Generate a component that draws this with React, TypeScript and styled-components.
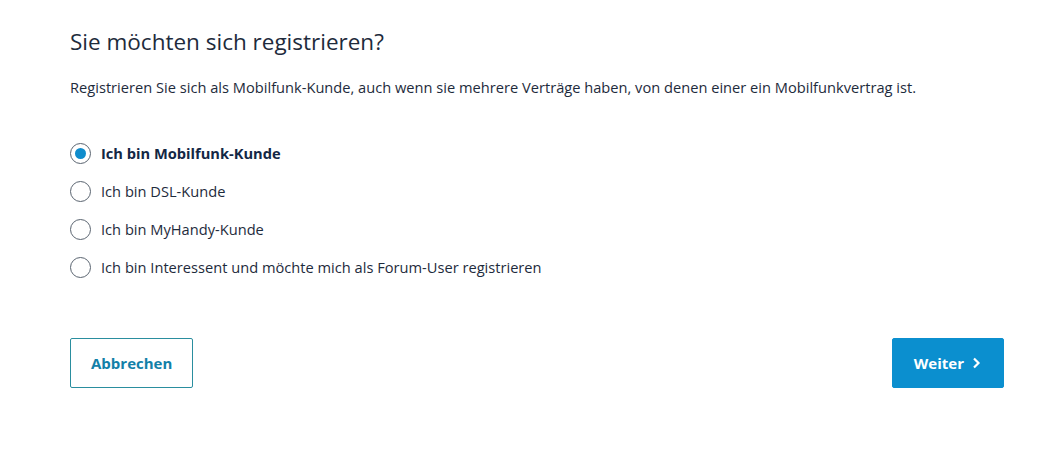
import React, { useState } from "react";
import styled, { createGlobalStyle } from "styled-components";

const Global = createGlobalStyle`
  html, body { margin: 0; padding: 0; background: #ffffff; }
  body { font-family: "Open Sans", "Noto Sans", sans-serif; color: #1e2b3c; }
`;

const Page = styled.div`
  width: 1060px;
  height: 452px;
  box-sizing: border-box;
  padding: 26px 56px 0 70px;
  display: flex;
  flex-direction: column;
`;

const Title = styled.h1`
  margin: 0;
  font-size: 22.5px;
  font-weight: 400;
  line-height: 32px;
  color: #1e2b3c;
`;

const Lead = styled.p`
  margin: 17px 0 0;
  font-size: 14.65px;
  line-height: 24px;
  color: #1e2b3c;
`;

const Options = styled.div`
  margin-top: 42px;
  display: flex;
  flex-direction: column;
  gap: 14px;
`;

const Option = styled.label<{ $checked: boolean }>`
  display: flex;
  align-items: center;
  gap: 10px;
  height: 24px;
  font-size: 14.65px;
  font-weight: ${(p) => (p.$checked ? 700 : 400)};
  color: ${(p) => (p.$checked ? "#132745" : "#1e2b3c")};
  cursor: pointer;
`;

const Radio = styled.span<{ $checked: boolean }>`
  width: 19px;
  height: 19px;
  border: 1px solid #5a6470;
  border-radius: 50%;
  display: flex;
  align-items: center;
  justify-content: center;
  flex-shrink: 0;
  &::after {
    content: "";
    width: 11px;
    height: 11px;
    border-radius: 50%;
    background: #0f8ccc;
    display: ${(p) => (p.$checked ? "block" : "none")};
  }
`;

const Actions = styled.div`
  margin-top: 59px;
  display: flex;
  justify-content: space-between;
`;

const Button = styled.button<{ $primary?: boolean }>`
  height: 50px;
  box-sizing: border-box;
  border-radius: 2px;
  font-family: inherit;
  font-size: 15px;
  font-weight: 700;
  display: flex;
  align-items: center;
  gap: 8px;
  cursor: pointer;
  padding: ${(p) => (p.$primary ? "0 22px 0 21px" : "0 20px")};
  border: 1px solid ${(p) => (p.$primary ? "#0b8fcf" : "#2a8e9f")};
  background: ${(p) => (p.$primary ? "#0b8fcf" : "#ffffff")};
  color: ${(p) => (p.$primary ? "#ffffff" : "#1380a8")};
`;

const options = [
  "Ich bin Mobilfunk-Kunde",
  "Ich bin DSL-Kunde",
  "Ich bin MyHandy-Kunde",
  "Ich bin Interessent und möchte mich als Forum-User registrieren",
];

export default function App() {
  const [sel, setSel] = useState(0);
  return (
    <>
      <Global />
      <Page>
        <Title>Sie möchten sich registrieren?</Title>
        <Lead>
          Registrieren Sie sich als Mobilfunk-Kunde, auch wenn sie mehrere Verträge haben, von denen einer ein
          Mobilfunkvertrag ist.
        </Lead>
        <Options>
          {options.map((o, i) => (
            <Option key={o} $checked={sel === i} onClick={() => setSel(i)}>
              <Radio $checked={sel === i} />
              {o}
            </Option>
          ))}
        </Options>
        <Actions>
          <Button>Abbrechen</Button>
          <Button $primary>
            Weiter
            <svg width="9" height="12" viewBox="0 0 9 12">
              <path d="M2 1.5 L6.5 6 L2 10.5" fill="none" stroke="#fff" strokeWidth="2.2" />
            </svg>
          </Button>
        </Actions>
      </Page>
    </>
  );
}
